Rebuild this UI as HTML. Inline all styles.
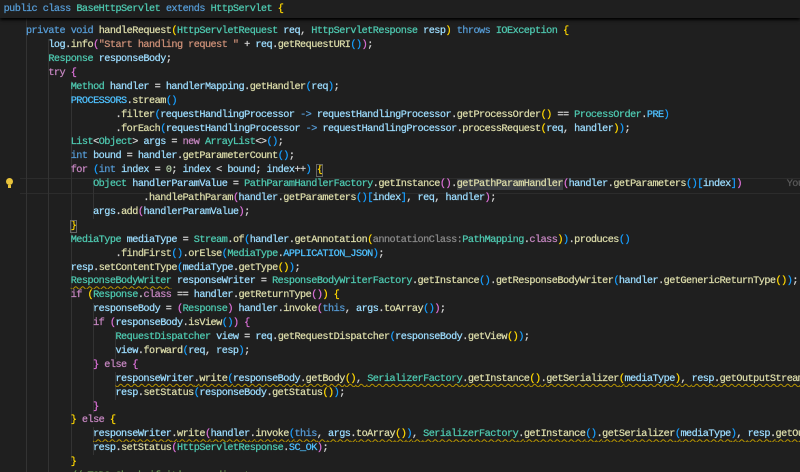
<!DOCTYPE html>
<html><head><meta charset="utf-8"><style>
html,body{margin:0;padding:0;background:#1f1f1f;width:800px;height:472px;overflow:hidden}
body{font-family:"Liberation Mono",monospace;font-size:10.2px;letter-spacing:-0.52px;color:#d4d4d4;position:relative;-webkit-text-stroke:0.25px currentColor}
.l{position:absolute;left:3.6px;right:0;overflow:hidden;white-space:pre;height:13.9px;line-height:13.9px;margin-top:2.3px}
.k{color:#569cd6}.c{color:#c586c0}.t{color:#4ec9b0}.f{color:#dcdcaa}.v{color:#9cdcfe}.s{color:#ce9178}.n{color:#b5cea8}
.b1{color:#ffd700}.b2{color:#da70d6}.b3{color:#179fff}.K{color:#4fc1ff}.g{color:#8a8a8a}.cm{color:#6a9955}
.w{text-decoration:underline wavy #b89500;text-decoration-thickness:1px;text-underline-offset:2px}
.sticky{position:absolute;left:0;top:0;width:800px;height:18px;background:#1f1f1f;box-shadow:0 2px 3px #000;z-index:2}
.guide{position:absolute;width:1px;background:#333}
.cur{position:absolute;left:20px;width:780px;top:178px;height:14px;border-top:1px solid #2c2c2c;border-bottom:1px solid #2c2c2c}
.sel{background:#3a3d41}
</style></head><body>
<div class="sticky"><div class="l" style="top:1px"><span class="k">public</span> <span class="k">class</span> <span class="t">BaseHttpServlet</span> <span class="k">extends</span> <span class="t">HttpServlet</span> <span class="b1">{</span></div></div>
<div class="cur"></div>
<div class="guide" style="left:26px;top:18px;height:454px"></div>
<div class="guide" style="left:48px;top:39px;height:433px"></div>
<div class="guide" style="left:71px;top:81px;height:380px"></div>
<div class="guide" style="left:93px;top:178px;height:41px"></div>
<div class="guide" style="left:93px;top:303px;height:110px"></div>
<div class="guide" style="left:93px;top:427px;height:28px"></div>
<div class="guide" style="left:115px;top:331px;height:28px"></div>
<div class="guide" style="left:115px;top:372px;height:28px"></div>
<div style="position:absolute;left:6px;top:178px;width:7px;height:7px;border-radius:50%;background:#e8c33b"></div>
<div style="position:absolute;left:8px;top:185px;width:3px;height:3px;background:#e8c33b"></div>

<div class="l" style="top:23px">    <span class="k">private</span> <span class="k">void</span> <span class="f">handleRequest</span><span class="b1">(</span><span class="t">HttpServletRequest</span> <span class="v">req</span>, <span class="t">HttpServletResponse</span> <span class="v">resp</span><span class="b1">)</span> <span class="k">throws</span> <span class="t">IOException</span> <span class="b1">{</span></div>
<div class="l" style="top:36.9px">        <span class="v">log</span>.<span class="f">info</span><span class="b2">(</span><span class="s">"Start handling request "</span> + <span class="v">req</span>.<span class="f">getRequestURI</span><span class="b3">()</span><span class="b2">)</span>;</div>
<div class="l" style="top:50.8px">        <span class="t">Response</span> <span class="v">responseBody</span>;</div>
<div class="l" style="top:64.7px">        <span class="c">try</span> <span class="b2">{</span></div>
<div class="l" style="top:78.6px">            <span class="t">Method</span> <span class="v">handler</span> = <span class="v">handlerMapping</span>.<span class="f">getHandler</span><span class="b3">(</span><span class="v">req</span><span class="b3">)</span>;</div>
<div class="l" style="top:92.5px">            <span class="K">PROCESSORS</span>.<span class="f">stream</span><span class="b3">()</span></div>
<div class="l" style="top:106.4px">                    .<span class="f">filter</span><span class="b3">(</span><span class="v">requestHandlingProcessor</span> <span class="k">-&gt;</span> <span class="v">requestHandlingProcessor</span>.<span class="f">getProcessOrder</span><span class="b1">()</span> == <span class="t">ProcessOrder</span>.<span class="K">PRE</span><span class="b3">)</span></div>
<div class="l" style="top:120.3px">                    .<span class="f">forEach</span><span class="b3">(</span><span class="v">requestHandlingProcessor</span> <span class="k">-&gt;</span> <span class="v">requestHandlingProcessor</span>.<span class="f">processRequest</span><span class="b1">(</span><span class="v">req</span>, <span class="v">handler</span><span class="b1">)</span><span class="b3">)</span>;</div>
<div class="l" style="top:134.2px">            <span class="t">List</span>&lt;<span class="t">Object</span>&gt; <span class="v">args</span> = <span class="c">new</span> <span class="t">ArrayList</span>&lt;&gt;<span class="b3">()</span>;</div>
<div class="l" style="top:148.1px">            <span class="k">int</span> <span class="v">bound</span> = <span class="v">handler</span>.<span class="f">getParameterCount</span><span class="b3">()</span>;</div>
<div class="l" style="top:162px">            <span class="c">for</span> <span class="b3">(</span><span class="k">int</span> <span class="v">index</span> = <span class="n">0</span>; <span class="v">index</span> &lt; <span class="v">bound</span>; <span class="v">index</span>++<span class="b3">)</span> <span class="b1" style="outline:1px solid #666">{</span></div>
<div class="l" style="top:175.9px">                <span class="t">Object</span> <span class="v">handlerParamValue</span> = <span class="t">PathParamHandlerFactory</span>.<span class="f">getInstance</span><span class="b2">()</span>.<span class="f sel">getPathParamHandler</span><span class="b2">(</span><span class="v">handler</span>.<span class="f">getParameters</span><span class="b3">()</span><span class="b3">[</span><span class="v">index</span><span class="b3">]</span><span class="b2">)</span>        <span style="color:#5a5a5a">You, </span></div>
<div class="l" style="top:189.8px">                         .<span class="f">handlePathParam</span><span class="b2">(</span><span class="v">handler</span>.<span class="f">getParameters</span><span class="b3">()</span><span class="b3">[</span><span class="v">index</span><span class="b3">]</span>, <span class="v">req</span>, <span class="v">handler</span><span class="b2">)</span>;</div>
<div class="l" style="top:203.7px">                <span class="v">args</span>.<span class="f">add</span><span class="b2">(</span><span class="v">handlerParamValue</span><span class="b2">)</span>;</div>
<div class="l" style="top:217.6px">            <span class="b1" style="outline:1px solid #666">}</span></div>
<div class="l" style="top:231.5px">            <span class="t">MediaType</span> <span class="v">mediaType</span> = <span class="t">Stream</span>.<span class="f">of</span><span class="b3">(</span><span class="v">handler</span>.<span class="f">getAnnotation</span><span class="b1">(</span><span class="g">annotationClass:</span><span class="t">PathMapping</span>.<span class="c">class</span><span class="b1">)</span><span class="b3">)</span>.<span class="f">produces</span><span class="b3">()</span></div>
<div class="l" style="top:245.4px">                    .<span class="f">findFirst</span><span class="b3">()</span>.<span class="f">orElse</span><span class="b3">(</span><span class="t">MediaType</span>.<span class="K">APPLICATION_JSON</span><span class="b3">)</span>;</div>
<div class="l" style="top:259.3px">            <span class="v">resp</span>.<span class="f">setContentType</span><span class="b3">(</span><span class="v">mediaType</span>.<span class="f">getType</span><span class="b1">()</span><span class="b3">)</span>;</div>
<div class="l" style="top:273.2px">            <span class="t w">ResponseBodyWriter</span> <span class="v">responseWriter</span> = <span class="t">ResponseBodyWriterFactory</span>.<span class="f">getInstance</span><span class="b3">()</span>.<span class="f">getResponseBodyWriter</span><span class="b3">(</span><span class="v">handler</span>.<span class="f">getGenericReturnType</span><span class="b1">()</span><span class="b3">)</span>;</div>
<div class="l" style="top:287.1px">            <span class="c">if</span> <span class="b1">(</span><span class="t">Response</span>.<span class="c">class</span> == <span class="v">handler</span>.<span class="f">getReturnType</span><span class="b2">()</span><span class="b1">)</span> <span class="b1">{</span></div>
<div class="l" style="top:301px">                <span class="v">responseBody</span> = <span class="b2">(</span><span class="t">Response</span><span class="b2">)</span> <span class="v">handler</span>.<span class="f">invoke</span><span class="b2">(</span><span class="k">this</span>, <span class="v">args</span>.<span class="f">toArray</span><span class="b3">()</span><span class="b2">)</span>;</div>
<div class="l" style="top:314.9px">                <span class="c">if</span> <span class="b2">(</span><span class="v">responseBody</span>.<span class="f">isView</span><span class="b3">()</span><span class="b2">)</span> <span class="b2">{</span></div>
<div class="l" style="top:328.8px">                    <span class="t">RequestDispatcher</span> <span class="v">view</span> = <span class="v">req</span>.<span class="f">getRequestDispatcher</span><span class="b3">(</span><span class="v">responseBody</span>.<span class="f">getView</span><span class="b1">()</span><span class="b3">)</span>;</div>
<div class="l" style="top:342.7px">                    <span class="v">view</span>.<span class="f">forward</span><span class="b3">(</span><span class="v">req</span>, <span class="v">resp</span><span class="b3">)</span>;</div>
<div class="l" style="top:356.6px">                <span class="b2">}</span> <span class="c">else</span> <span class="b2">{</span></div>
<div class="l" style="top:370.5px">                    <span class="w"><span class="v">responseWriter</span>.<span class="f">write</span><span class="b3">(</span><span class="v">responseBody</span>.<span class="f">getBody</span><span class="b1">()</span>, <span class="t">SerializerFactory</span>.<span class="f">getInstance</span><span class="b1">()</span>.<span class="f">getSerializer</span><span class="b1">(</span><span class="v">mediaType</span><span class="b1">)</span>, <span class="v">resp</span>.<span class="f">getOutputStream</span><span class="b1">()</span></span></div>
<div class="l" style="top:384.4px">                    <span class="v">resp</span>.<span class="f">setStatus</span><span class="b3">(</span><span class="v">responseBody</span>.<span class="f">getStatus</span><span class="b1">()</span><span class="b3">)</span>;</div>
<div class="l" style="top:398.3px">                <span class="b2">}</span></div>
<div class="l" style="top:412.2px">            <span class="b1">}</span> <span class="c">else</span> <span class="b1">{</span></div>
<div class="l" style="top:426.1px">                <span class="w"><span class="v">responseWriter</span>.<span class="f">write</span><span class="b2">(</span><span class="v">handler</span>.<span class="f">invoke</span><span class="b3">(</span><span class="k">this</span>, <span class="v">args</span>.<span class="f">toArray</span><span class="b1">()</span><span class="b3">)</span>, <span class="t">SerializerFactory</span>.<span class="f">getInstance</span><span class="b3">()</span>.<span class="f">getSerializer</span><span class="b3">(</span><span class="v">mediaType</span><span class="b3">)</span>, <span class="v">resp</span>.<span class="f">getOutputStream</span><span class="b3">()</span></span></div>
<div class="l" style="top:440px">                <span class="v">resp</span>.<span class="f">setStatus</span><span class="b2">(</span><span class="t">HttpServletResponse</span>.<span class="K">SC_OK</span><span class="b2">)</span>;</div>
<div class="l" style="top:453.9px">            <span class="b1">}</span></div>
<div class="l" style="top:467.8px">            <span class="cm">// TODO Check if it's a redirect</span></div>
</body></html>
